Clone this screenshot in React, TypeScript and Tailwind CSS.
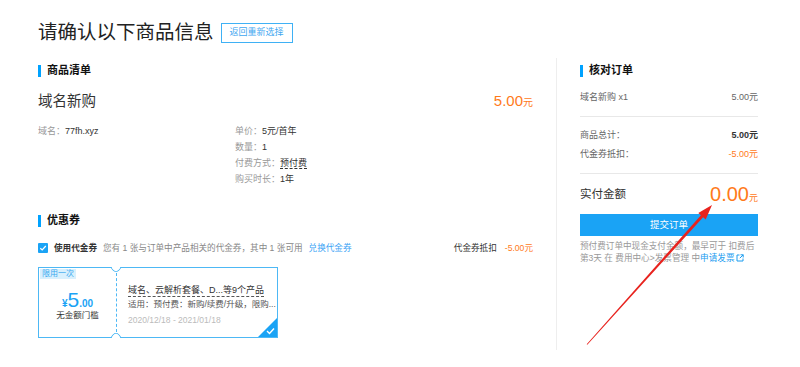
import React from 'react';

const FONT = "font-['Liberation_Sans','Noto_Sans_CJK_SC',sans-serif]";

function SectionTitle({ title }: { title: string }) {
  return (
    <div className="flex h-[13px] items-center">
      <span className="h-[12px] w-[3px] bg-[#00a2ff]" />
      <span className="ml-[6px] text-[11px] font-bold leading-none text-[#111]">{title}</span>
    </div>
  );
}

function Coupon() {
  return (
    <div className="relative mt-[12px] flex h-[71px] w-[240px] border border-[#4db8f5]">
      {/* tag */}
      <span className="absolute left-px top-px bg-[#d9f0fd] px-[2px] text-[8px] leading-[10px] text-[#3aa9ef]">
        限用一次
      </span>
      {/* notches */}
      <span className="absolute left-[72px] top-[-6px] h-[10px] w-[10px] rotate-45 rounded-full border border-[#4db8f5] border-l-transparent border-t-transparent bg-white" />
      <span className="absolute bottom-[-6px] left-[72px] h-[10px] w-[10px] rotate-45 rounded-full border border-[#4db8f5] border-b-transparent border-r-transparent bg-white" />

      <div className="flex w-[77px] flex-col items-center pt-[21px] leading-none">
        <div className="flex h-[20px] items-baseline text-[#1aa3f5]">
          <span className="text-[10px] font-bold">¥</span>
          <span className="text-[21px] leading-none">5</span>
          <span className="text-[10px] font-bold">.00</span>
        </div>
        <div className="h-[12px] text-[8.5px] leading-[12px] text-[#333]">无金额门槛</div>
      </div>
      <div className="my-[5px] w-0 border-l border-dashed border-[#4db8f5]" />
      <div className="flex-1 pl-[11px] pt-[16px] text-[8.5px] leading-[13px]">
        <div className="h-[14px] text-[9px] leading-[13px]">
          <span className="inline-block border-b border-dashed border-[#555] leading-[12px] text-[#333]">
            域名、云解析套餐、D...等9个产品
          </span>
        </div>
        <div className="h-[13px] text-[#555]">适用：预付费：新购/续费/升级，限购...</div>
        <div className="mt-[3px] h-[13px] text-[#bbb]">2020/12/18 - 2021/01/18</div>
      </div>

      {/* selected corner */}
      <svg className="absolute bottom-0 right-0" width="19" height="19" viewBox="0 0 19 19">
        <polygon points="19,0 19,19 0,19" fill="#1aa3f5" />
        <polyline points="9,13 11.5,15.5 16,10.5" fill="none" stroke="#fff" strokeWidth="1.4" />
      </svg>
    </div>
  );
}

function OrderRow({ label, value, valueClass }: { label: string; value: string; valueClass: string }) {
  return (
    <div className="flex h-[14px] items-center justify-between text-[9px] leading-none">
      <span className="text-[#666]">{label}</span>
      <span className={valueClass}>{value}</span>
    </div>
  );
}

export default function App() {
  return (
    <div className={`relative h-[367px] w-[800px] overflow-hidden bg-white ${FONT}`}>
      {/* header */}
      <div className="mt-[22px] flex h-[22px] items-center pl-[38px]">
        <h1 className="text-[19.5px] font-normal leading-none text-[#222]">请确认以下商品信息</h1>
        <button className="ml-[7px] h-[20px] w-[72px] border border-[#3fb1f5] text-[9px] text-[#3fa7f0]">
          返回重新选择
        </button>
      </div>

      <div className="mt-[14px] flex h-[292px] pl-[38px]">
        {/* left */}
        <div className="w-[495px] pt-[6px]">
          <SectionTitle title="商品清单" />
          <div className="mt-[15px] flex h-[18px] items-center justify-between">
            <span className="text-[14.5px] leading-none text-[#333]">域名新购</span>
            <span className="flex items-baseline text-[#ff7a1a]">
              <span className="text-[15px] leading-none">5.00</span>
              <span className="text-[10px]">元</span>
            </span>
          </div>

          <div className="mt-[13px] flex text-[9px] leading-[16px]">
            <div className="w-[197px]">
              <span className="text-[#999]">域名：</span>
              <span className="text-[#333]">77fh.xyz</span>
            </div>
            <div>
              <div>
                <span className="text-[#999]">单价：</span>
                <span className="text-[#333]">5元/首年</span>
              </div>
              <div>
                <span className="text-[#999]">数量：</span>
                <span className="text-[#333]">1</span>
              </div>
              <div>
                <span className="text-[#999]">付费方式：</span>
                <span className="border-b border-dashed border-[#333] text-[#333]">预付费</span>
              </div>
              <div>
                <span className="text-[#999]">购买时长：</span>
                <span className="text-[#333]">1年</span>
              </div>
            </div>
          </div>

          <div className="mt-[27px]">
            <SectionTitle title="优惠券" />
          </div>

          <div className="mt-[14px] flex h-[14px] items-center justify-between text-[8.6px] leading-none">
            <div className="flex items-center">
              <span className="flex h-[10px] w-[10px] items-center justify-center rounded-[1px] bg-[#1aa3f5]">
                <svg width="8" height="8" viewBox="0 0 8 8">
                  <polyline points="1.3,4.2 3.2,6 6.8,2" fill="none" stroke="#fff" strokeWidth="1.2" />
                </svg>
              </span>
              <span className="ml-[6px] font-bold text-[#333]">使用代金券</span>
              <span className="ml-[6px] text-[#888]">您有 1 张与订单中产品相关的代金券，其中 1 张可用</span>
              <span className="ml-[6px] text-[#3aa3f5]">兑换代金券</span>
            </div>
            <div className="flex items-center">
              <span className="text-[#333]">代金券抵扣</span>
              <span className="ml-[8px] text-[#ff7a1a]">-5.00元</span>
            </div>
          </div>

          <Coupon />
        </div>

        {/* divider */}
        <div className="ml-[23px] w-px bg-[#eeeeee]" />

        {/* right */}
        <div className="ml-[23px] w-[178px] pt-[6px]">
          <SectionTitle title="核对订单" />
          <div className="mt-[13px]">
            <OrderRow label="域名新购 x1" value="5.00元" valueClass="text-[#666]" />
          </div>
          <div className="mt-[12px] h-px bg-[#e8e8e8]" />
          <div className="mt-[11px]">
            <OrderRow label="商品总计：" value="5.00元" valueClass="font-bold text-[#333]" />
          </div>
          <div className="mt-[5px]">
            <OrderRow label="代金券抵扣：" value="-5.00元" valueClass="text-[#ff7a1a]" />
          </div>
          <div className="mt-[12px] h-px bg-[#e8e8e8]" />

          <div className="mt-[10px] flex h-[22px] items-center justify-between">
            <span className="text-[11.5px] leading-none text-[#333]">实付金额</span>
            <span className="flex items-baseline text-[#ff7a1a]">
              <span className="text-[20px] leading-none">0.00</span>
              <span className="text-[9px]">元</span>
            </span>
          </div>

          <button className="mt-[8px] h-[22px] w-full bg-[#1aa3f5] text-[9.5px] text-white">提交订单</button>

          <div className="mt-[4px] whitespace-nowrap text-[8.6px] leading-[12px] text-[#999]">
            预付费订单中现金支付金额，最早可于 扣费后
            <br />
            第3天 在 费用中心&gt;发票管理 中
            <span className="text-[#1a9cf0]">申请发票</span>
            <svg className="ml-[2px] inline-block align-[-1px]" width="8" height="8" viewBox="0 0 8 8">
              <path d="M3.5 1H1v6h6V4.5" fill="none" stroke="#1a9cf0" strokeWidth="1" />
              <path d="M4.5 0.8H7.2V3.5M7.2 0.8L3.8 4.2" fill="none" stroke="#1a9cf0" strokeWidth="1" />
            </svg>
          </div>
        </div>
      </div>

      {/* red annotation arrow */}
      <svg className="pointer-events-none absolute left-0 top-0" width="800" height="367" viewBox="0 0 800 367">
        <polygon
          points="587.3,344.8 703.1,217.2 705.7,219.5 712,205 698.3,212.9 700.9,215.2 586.7,344.2"
          fill="#e8231e"
        />
      </svg>
    </div>
  );
}
